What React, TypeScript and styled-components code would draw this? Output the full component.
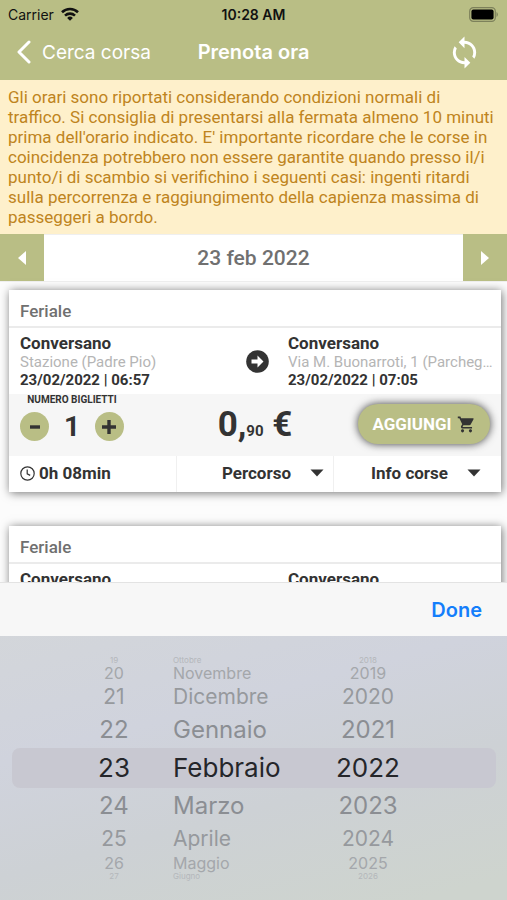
import React, { useState } from "react";
import styled, { createGlobalStyle } from "styled-components";
import { MdShoppingCart, MdSync } from "react-icons/md";

const olive = "#b9be85";
const ink = "#333333";
const ios = '"Inter", "Liberation Sans", sans-serif';

const GlobalStyle = createGlobalStyle`
  *, *::before, *::after { box-sizing: border-box; }
  body { margin: 0; background: #fcfcfc; font-family: Roboto, "Liberation Sans", sans-serif; color: ${ink}; }
  button { font: inherit; color: inherit; border: 0; padding: 0; background: none; cursor: pointer; }
  svg { display: block; flex: none; }
`;

const Screen = styled.div`
  position: relative;
  height: 100vh;
  overflow: hidden;
  display: flex;
  flex-direction: column;
`;

const Header = styled.header`
  flex: none;
  height: 80px;
  background: ${olive};
  font-family: ${ios};
`;

const StatusBar = styled.div`
  display: grid;
  grid-template-columns: 1fr auto 1fr;
  align-items: center;
  height: 28px;
  padding: 0 8px;
  font-size: 14px;
  color: #111;
`;

const Carrier = styled.span`
  display: flex;
  align-items: center;
  gap: 7px;
`;

const Clock = styled.time`
  font-weight: 600;
`;

const BatterySlot = styled.span`
  justify-self: end;
`;

const NavBar = styled.nav`
  display: grid;
  grid-template-columns: 1fr auto 1fr;
  align-items: center;
  height: 48px;
  padding: 0 16px;
  color: #fff;
  font-size: 19px;
`;

const BackButton = styled.button`
  display: flex;
  align-items: center;
  gap: 10px;
  justify-self: start;
  white-space: nowrap;
`;

const Title = styled.h1`
  margin: 0;
  font-size: 20px;
  font-weight: 600;
`;

const RefreshButton = styled.button`
  justify-self: end;
  margin-right: 9px;
`;

const Notice = styled.p`
  flex: none;
  margin: 0;
  padding: 7px 8px;
  background: #fef0cb;
  color: #bf8420;
  font-size: 17px;
  line-height: 20px;
`;

const DateBar = styled.div`
  flex: none;
  display: flex;
  height: 48px;
  border-bottom: 1px solid #efefef;
  background: #fff;
`;

const DateStep = styled.button`
  display: grid;
  place-items: center;
  width: 44px;
  background: ${olive};
`;

const DateLabel = styled.button`
  flex: 1;
  border-top: 1px solid #efefef;
  color: #707070;
  font-size: 21px;
  font-weight: 500;
`;

const Trips = styled.main`
  display: flex;
  flex-direction: column;
  gap: 34px;
  padding: 8px 6px 0 9px;
`;

const Card = styled.article`
  background: #fff;
  box-shadow: 1px 1px 9px rgba(0, 0, 0, 0.55);
`;

const CardHeader = styled.h2`
  margin: 0;
  padding: 0 11px;
  height: 38px;
  border-bottom: 2px solid #ebebeb;
  color: #707070;
  font-size: 17px;
  font-weight: 500;
  line-height: 42px;
`;

const Route = styled.div`
  display: grid;
  grid-template-columns: minmax(0, 1fr) 62px minmax(0, 1fr);
  align-items: center;
  height: 66px;
  padding: 1px 7px 0 11px;
`;

const Stop = styled.div`
  font-size: 15px;
  font-weight: 700;
  line-height: 18px;
`;

const StopCity = styled.div`
  font-size: 17px;
  line-height: 19px;
`;

const StopPlace = styled.div`
  color: #b5b5b5;
  font-weight: 400;
  overflow: hidden;
  text-overflow: ellipsis;
  white-space: nowrap;
`;

const RouteArrow = styled.span`
  justify-self: center;
`;

const Purchase = styled.div`
  display: grid;
  grid-template-columns: minmax(0, 1fr) auto minmax(0, 1fr);
  align-items: center;
  height: 62px;
  padding: 0 11px 2px;
  background: #f6f6f6;
`;

const Tickets = styled.div`
  align-self: start;
  width: 104px;
`;

const TicketsLabel = styled.div`
  font-size: 10px;
  font-weight: 700;
  line-height: 12px;
  text-align: center;
  white-space: nowrap;
`;

const Stepper = styled.div`
  display: flex;
  align-items: center;
  justify-content: space-between;
  margin-top: 6px;
`;

const RoundButton = styled.button`
  display: grid;
  place-items: center;
  width: 29px;
  height: 29px;
  border-radius: 50%;
  background: ${olive};
`;

const Count = styled.output`
  font-size: 28px;
  font-weight: 700;
  line-height: 29px;
`;

const Price = styled.div`
  font-size: 35px;
  font-weight: 700;
`;

const Cents = styled.span`
  font-size: 15px;
`;

const AddButton = styled.button`
  display: flex;
  align-items: center;
  justify-content: center;
  gap: 5px;
  justify-self: end;
  width: 132px;
  height: 40px;
  border-radius: 20px;
  background: ${olive};
  box-shadow: 0 0 9px rgba(0, 0, 0, 0.75);

  span {
    color: #fff;
    font-size: 17px;
    font-weight: 700;
  }
`;

const CardFooter = styled.div`
  display: grid;
  grid-template-columns: 167fr 157fr 168fr;
  height: 36px;
  font-size: 17px;
  font-weight: 700;
`;

const Duration = styled.div`
  display: flex;
  align-items: center;
  gap: 4px;
  padding: 0 0 2px 11px;
`;

const Expand = styled.button`
  display: flex;
  align-items: center;
  justify-content: flex-end;
  gap: 19px;
  padding: 0 9px 2px 0;
  border-left: 1px solid #f0f0f0;
  font-weight: 700;

  &:last-child {
    padding-right: 20px;
  }
`;

const Sheet = styled.section`
  position: absolute;
  inset: auto 0 0;
  background: linear-gradient(165deg, #d3d6da 10%, #d0d3dd 40%, #cdd1d5 65%, #ced4ce 95%);
  font-family: ${ios};
`;

const SheetBar = styled.div`
  display: flex;
  align-items: center;
  justify-content: flex-end;
  height: 54px;
  padding: 0 25px;
  border-top: 1px solid #e3e3e3;
  background: #f7f7f7;
`;

const DoneButton = styled.button`
  color: #147efb;
  font-size: 20px;
  font-weight: 600;
`;

const Wheels = styled.div`
  position: relative;
  display: grid;
  grid-template-columns: 119fr 120fr 161fr;
  gap: 42px;
  margin: 0 11px 0 12px;
  padding: 20px 0;

  &::before {
    content: "";
    position: absolute;
    inset: 0;
    height: 40px;
    margin: auto 0;
    border-radius: 8px;
    background: #c8c8d1;
  }
`;

const Wheel = styled.ul<{ $align: "start" | "end" }>`
  position: relative;
  display: flex;
  flex-direction: column;
  align-items: ${(p) => p.$align};
  margin: 0;
  padding: 0;
  list-style: none;
`;

const steps = [
  { height: 40, size: 26, color: "#25262a" },
  { height: 36, size: 24, color: "#8b8e93" },
  { height: 30, size: 21, color: "#96999d" },
  { height: 18, size: 16, color: "#a4a7ab" },
  { height: 8, size: 8, color: "#b4b7bb" },
];

const WheelItem = styled.li<{ $distance: number; $width: number; $center: boolean }>`
  width: ${(p) => p.$width}px;
  height: ${(p) => steps[p.$distance].height}px;
  color: ${(p) => steps[p.$distance].color};
  font-size: ${(p) => steps[p.$distance].size}px;
  line-height: ${(p) => steps[p.$distance].height}px;
  text-align: ${(p) => (p.$center ? "center" : "left")};
  white-space: nowrap;
`;

const WifiIcon = () => (
  <svg width="18" height="14" viewBox="0 0 18 14" fill="none" stroke="#111" strokeWidth="2.6" aria-hidden="true">
    <path d="M1 5.2a11.6 11.6 0 0 1 16 0" />
    <path d="M4 8.6a7.4 7.4 0 0 1 10 0" />
    <path d="M9 13.8 6.1 10.9a4.2 4.2 0 0 1 5.8 0z" fill="#111" stroke="none" />
  </svg>
);

const BatteryIcon = () => (
  <svg width="30" height="15" viewBox="0 0 30 15" aria-hidden="true">
    <rect x="0.7" y="0.7" width="25.6" height="13.6" rx="3.6" fill="none" stroke="#7d815b" strokeWidth="1.2" />
    <rect x="2.4" y="2.4" width="22.2" height="10.2" rx="2" fill="#000" />
    <path d="M27.5 5a3 3 0 0 1 0 5z" fill="#7d815b" />
  </svg>
);

const BackIcon = () => (
  <svg
    width="16"
    height="24"
    viewBox="0 0 16 24"
    fill="none"
    stroke="#fff"
    strokeWidth="3"
    strokeLinecap="round"
    strokeLinejoin="round"
    aria-hidden="true"
  >
    <path d="M13 2 3 12l10 10" />
  </svg>
);

const Triangle = ({ direction }: { direction: "left" | "right" }) => (
  <svg width="8" height="14" viewBox="0 0 8 14" fill="#fff" aria-hidden="true">
    <path d={direction === "left" ? "M8 0v14L0 7z" : "M0 0v14l8-7z"} />
  </svg>
);

const Caret = () => (
  <svg width="14" height="8" viewBox="0 0 14 8" fill={ink} aria-hidden="true">
    <path d="M0.5 0.5h13L7 7.5z" />
  </svg>
);

const ArrowCircleIcon = () => (
  <svg width="23" height="23" viewBox="0 0 23 23" aria-hidden="true">
    <circle cx="11.5" cy="11.5" r="11.3" fill={ink} />
    <path d="M5.5 9.4h6V5.6l6 5.9-6 5.9v-3.8h-6z" fill="#fff" />
  </svg>
);

const ClockIcon = () => (
  <svg width="15" height="15" viewBox="0 0 15 15" fill="none" stroke={ink} strokeWidth="1.2" aria-hidden="true">
    <circle cx="7.5" cy="7.5" r="6.7" />
    <path d="M7.2 3.4v4.4l3 1.6" />
  </svg>
);

const Sign = ({ plus }: { plus?: boolean }) => (
  <svg width="14" height="14" viewBox="0 0 14 14" stroke={ink} strokeWidth="3.4" aria-hidden="true">
    <path d={plus ? "M0 7h14M7 0v14" : "M2 7h10"} />
  </svg>
);

type StopData = [city: string, place: string, time: string];

interface Trip {
  id: number;
  day: string;
  from: StopData;
  to: StopData;
}

const trips: Trip[] = [1, 2].map((id) => ({
  id,
  day: "Feriale",
  from: ["Conversano", "Stazione (Padre Pio)", "23/02/2022 | 06:57"],
  to: ["Conversano", "Via M. Buonarroti, 1 (Parcheggio)", "23/02/2022 | 07:05"],
}));

const StopInfo = ({ stop }: { stop: StopData }) => (
  <Stop>
    <StopCity>{stop[0]}</StopCity>
    <StopPlace>{stop[1]}</StopPlace>
    <div>{stop[2]}</div>
  </Stop>
);

const TripCard = ({ trip }: { trip: Trip }) => {
  const [count, setCount] = useState(1);
  return (
    <Card>
      <CardHeader>{trip.day}</CardHeader>
      <Route>
        <StopInfo stop={trip.from} />
        <RouteArrow>
          <ArrowCircleIcon />
        </RouteArrow>
        <StopInfo stop={trip.to} />
      </Route>
      <Purchase>
        <Tickets>
          <TicketsLabel>NUMERO BIGLIETTI</TicketsLabel>
          <Stepper>
            <RoundButton aria-label="Meno" onClick={() => setCount(Math.max(1, count - 1))}>
              <Sign />
            </RoundButton>
            <Count>{count}</Count>
            <RoundButton aria-label="Più" onClick={() => setCount(count + 1)}>
              <Sign plus />
            </RoundButton>
          </Stepper>
        </Tickets>
        <Price>
          0,<Cents>90</Cents> €
        </Price>
        <AddButton>
          <span>AGGIUNGI</span>
          <MdShoppingCart size={19} />
        </AddButton>
      </Purchase>
      <CardFooter>
        <Duration>
          <ClockIcon />
          0h 08min
        </Duration>
        <Expand>
          Percorso <Caret />
        </Expand>
        <Expand>
          Info corse <Caret />
        </Expand>
      </CardFooter>
    </Card>
  );
};

const wheels = [
  {
    label: "Giorno",
    align: "end" as const,
    width: 34,
    center: true,
    items: ["19", "20", "21", "22", "23", "24", "25", "26", "27"],
  },
  {
    label: "Mese",
    align: "start" as const,
    width: 120,
    center: false,
    items: ["Ottobre", "Novembre", "Dicembre", "Gennaio", "Febbraio", "Marzo", "Aprile", "Maggio", "Giugno"],
  },
  {
    label: "Anno",
    align: "start" as const,
    width: 66,
    center: true,
    items: ["2018", "2019", "2020", "2021", "2022", "2023", "2024", "2025", "2026"],
  },
];

export default function App() {
  return (
    <Screen>
      <GlobalStyle />
      <Header>
        <StatusBar>
          <Carrier>
            Carrier <WifiIcon />
          </Carrier>
          <Clock>10:28 AM</Clock>
          <BatterySlot>
            <BatteryIcon />
          </BatterySlot>
        </StatusBar>
        <NavBar>
          <BackButton>
            <BackIcon /> Cerca corsa
          </BackButton>
          <Title>Prenota ora</Title>
          <RefreshButton aria-label="Aggiorna">
            <MdSync size={35} />
          </RefreshButton>
        </NavBar>
      </Header>
      <Notice>
        Gli orari sono riportati considerando condizioni normali di traffico. Si consiglia di presentarsi alla fermata
        almeno 10 minuti prima dell'orario indicato. E' importante ricordare che le corse in coincidenza potrebbero non
        essere garantite quando presso il/i punto/i di scambio si verifichino i seguenti casi: ingenti ritardi sulla
        percorrenza e raggiungimento della capienza massima di passeggeri a bordo.
      </Notice>
      <DateBar>
        <DateStep aria-label="Giorno precedente">
          <Triangle direction="left" />
        </DateStep>
        <DateLabel>23 feb 2022</DateLabel>
        <DateStep aria-label="Giorno successivo">
          <Triangle direction="right" />
        </DateStep>
      </DateBar>
      <Trips>
        {trips.map((trip) => (
          <TripCard key={trip.id} trip={trip} />
        ))}
      </Trips>
      <Sheet aria-label="Scegli la data">
        <SheetBar>
          <DoneButton>Done</DoneButton>
        </SheetBar>
        <Wheels>
          {wheels.map((wheel) => (
            <Wheel key={wheel.label} role="listbox" aria-label={wheel.label} $align={wheel.align}>
              {wheel.items.map((item, i) => (
                <WheelItem
                  key={item}
                  role="option"
                  aria-selected={i === 4}
                  $distance={Math.abs(i - 4)}
                  $width={wheel.width}
                  $center={wheel.center}
                >
                  {item}
                </WheelItem>
              ))}
            </Wheel>
          ))}
        </Wheels>
      </Sheet>
    </Screen>
  );
}
